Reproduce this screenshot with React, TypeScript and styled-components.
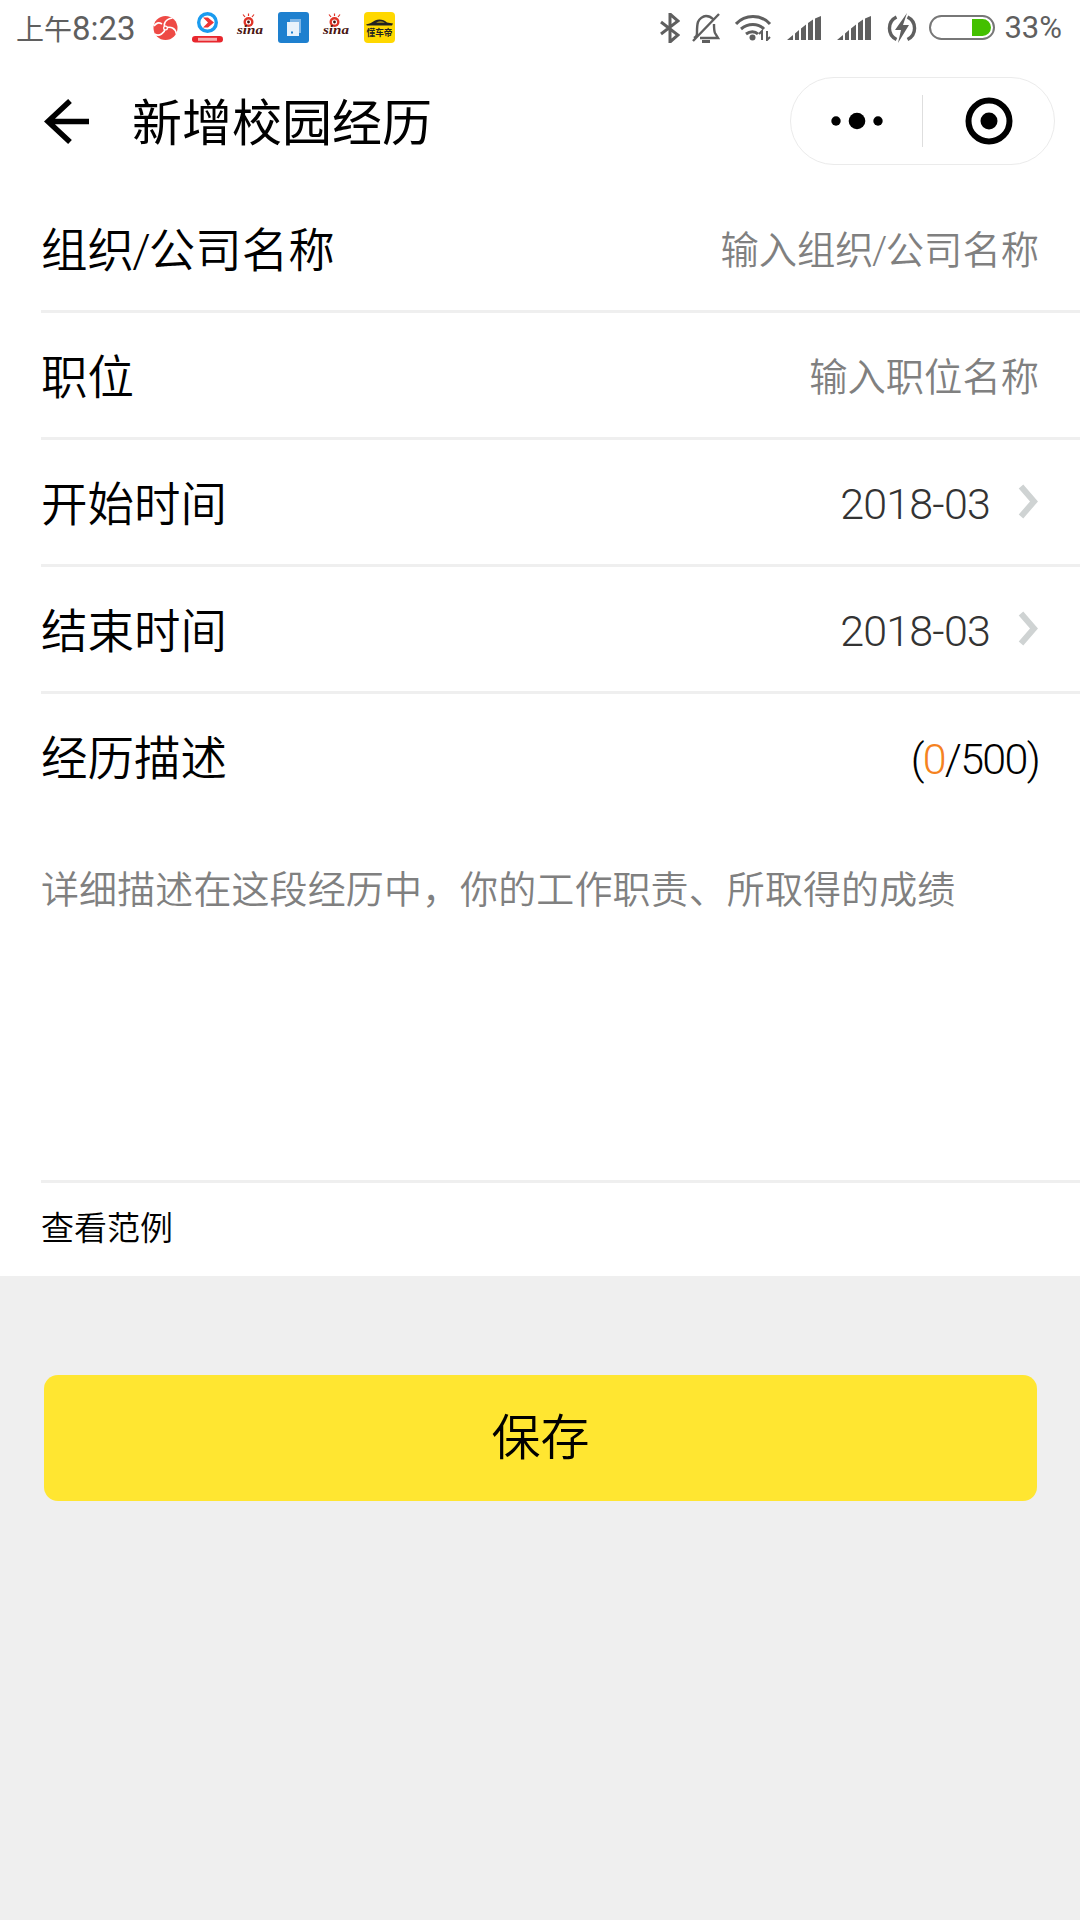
import React from "react";
import styled, { createGlobalStyle } from "styled-components";

const CJK = `"Noto Sans CJK SC", "Noto Sans", sans-serif`;
const LATIN = `Roboto, "Noto Sans CJK SC", sans-serif`;

const Global = createGlobalStyle`
  html, body {
    margin: 0;
    padding: 0;
    background: #efefef;
  }
  * { box-sizing: border-box; }
`;

const Page = styled.div`
  width: 1080px;
  height: 1920px;
  display: flex;
  flex-direction: column;
  background: #efefef;
  font-family: ${CJK};
  overflow: hidden;
`;

const StatusBar = styled.div`
  height: 60px;
  background: #fff;
  display: flex;
  align-items: center;
  justify-content: space-between;
  padding: 0 18px 5px 16px;
  color: #5f5f5f;
`;
const StatusGroup = styled.div`
  display: flex;
  align-items: center;
`;
const Clock = styled.span`
  font-family: ${CJK};
  font-size: 28px;
  width: 133px;
  white-space: nowrap;
`;
const ClockTime = styled.span`
  font-family: ${LATIN};
  font-size: 33px;
`;
const NoticeIcons = styled.div`
  display: flex;
  gap: 12px;
`;
const NoticeIcon = styled.svg`
  width: 31px;
  height: 31px;
  display: block;
  overflow: visible;
`;
const SinaText = styled.text`
  font-family: "Liberation Serif", serif;
  font-style: italic;
  font-weight: 700;
  font-size: 13px;
  fill: #4a1512;
`;
const CarText = styled.text`
  font-family: ${CJK};
  font-weight: 700;
  font-size: 9px;
  fill: #222;
`;
const Sys = styled.svg<{ $gap?: number }>`
  display: block;
  flex: none;
  margin-right: ${(p) => p.$gap ?? 0}px;
`;
const Percent = styled.span`
  font-family: ${LATIN};
  font-size: 31px;
  margin-left: 9px;
`;

const NavBar = styled.header`
  height: 126px;
  background: #fff;
  display: flex;
  align-items: center;
  padding: 0 25px 5px 44px;
`;
const BackIcon = styled.svg`
  width: 46px;
  height: 46px;
  margin-top: 2px;
  display: block;
  flex: none;
`;
const Title = styled.h1`
  margin: 0 0 4px 42px;
  flex: 1;
  font-size: 50px;
  font-weight: 400;
  line-height: 1;
  color: #000;
`;
const Capsule = styled.div`
  width: 265px;
  height: 88px;
  border: 1px solid #ebebeb;
  border-radius: 44px;
  display: flex;
  align-items: center;
  background: #fff;
`;
const CapsulePart = styled.div`
  flex: 1;
  height: 100%;
  display: flex;
  align-items: center;
  justify-content: center;
`;
const CapsuleLine = styled.div`
  width: 1px;
  height: 52px;
  background: #dedede;
`;

const Form = styled.section`
  background: #fff;
  padding-left: 41px;
`;
const Row = styled.div<{ $plain?: boolean }>`
  height: 127px;
  display: flex;
  align-items: center;
  justify-content: space-between;
  padding: 0 41px 5px 0;
  border-bottom: 3px solid ${(p) => (p.$plain ? "#fff" : "#efefef")};
`;
const Label = styled.span`
  font-family: ${LATIN};
  font-size: 46.5px;
  color: #000;
  line-height: 1;
  font-weight: 350;
  margin-top: 11px;
  white-space: nowrap;
`;
const Placeholder = styled.span`
  font-family: ${LATIN};
  font-size: 38.3px;
  font-weight: 350;
  color: #808080;
  line-height: 1;
  margin-top: 11px;
  white-space: nowrap;
`;
const Slash = styled.span`
  margin: 0 -0.04em;
`;
const Value = styled.span`
  display: flex;
  align-items: center;
  font-family: ${LATIN};
  font-size: 43px;
  font-weight: 300;
  letter-spacing: -0.8px;
  color: #333;
`;
const ValueText = styled.span`
  margin-top: 8px;
`;
const Chevron = styled.svg`
  width: 24px;
  height: 38px;
  margin: 4px 0 0 25px;
  display: block;
`;
const Counter = styled.span`
  font-family: ${LATIN};
  font-size: 43px;
  font-weight: 300;
  letter-spacing: -1.7px;
  margin-top: 11px;
  color: #000;
`;
const CounterNow = styled.span`
  color: #f58220;
`;
const DescArea = styled.div`
  height: 362px;
  padding-top: 41px;
  border-bottom: 3px solid #efefef;
`;
const DescHint = styled.div`
  font-size: 38px;
  font-weight: 350;
  line-height: 1.3;
  letter-spacing: 0.1px;
  color: #808080;
  white-space: nowrap;
`;
const Example = styled.div`
  height: 93px;
  display: flex;
  align-items: center;
  padding-bottom: 7px;
  font-size: 33px;
  font-weight: 350;
  color: #000;
`;

const SaveWrap = styled.div`
  padding: 99px 43px 0 44px;
`;
const SaveButton = styled.button`
  width: 100%;
  height: 126px;
  border: none;
  border-radius: 14px;
  padding: 0 0 10px;
  background: #ffe631;
  font-family: ${CJK};
  font-size: 49px;
  font-weight: 350;
  color: #000;
`;

const PhoenixIcon = () => (
  <NoticeIcon viewBox="0 0 31 31">
    <circle cx="16.5" cy="16" r="12" fill="#ee4a45" />
    <g fill="none" stroke="#fff" strokeWidth="1.6">
      <path d="M16.500 16c-3-4 0-9 7-10" />
      <path d="M16.500 16c5-2 10 0 11 6" />
      <path d="M16.500 16c-1 5-6 9-11 6" />
      <path d="M13 12c-3-2-6-1-8 2" />
    </g>
    <circle cx="16.500" cy="16" r="2.500" fill="#fff" />
    <circle cx="16.500" cy="16" r="1.200" fill="#ee4a45" />
  </NoticeIcon>
);
const VideoIcon = () => (
  <NoticeIcon viewBox="0 0 31 31">
    <circle cx="15.500" cy="10.500" r="8.800" fill="none" stroke="#1a9bef" strokeWidth="3.400" />
    <path d="M11 5.500h5l6 5-6 5h-5l5-5z" fill="#ee3535" />
    <rect x="0" y="24" width="31" height="6.500" rx="3.200" fill="#e8262d" />
    <rect x="6" y="25.800" width="19" height="3" fill="#f6b0b0" />
  </NoticeIcon>
);
const SinaIcon = () => (
  <NoticeIcon viewBox="0 0 31 31">
    <circle cx="13.500" cy="10" r="5" fill="#e03428" />
    <path d="M10 5 8 2.500M13.500 4V1.500M17 5l2-2.500" stroke="#e03428" strokeWidth="1.200" />
    <circle cx="13.500" cy="10" r="2.600" fill="#fff" />
    <circle cx="13.500" cy="10" r="1.400" fill="#40100c" />
    <SinaText x="2" y="22" textLength="26" lengthAdjust="spacingAndGlyphs">sina</SinaText>
  </NoticeIcon>
);
const DocIcon = () => (
  <NoticeIcon viewBox="0 0 31 31">
    <rect width="31" height="31" rx="3" fill="#1e80cf" />
    <rect x="12" y="7" width="11" height="14" fill="#7fb6e6" />
    <rect x="9" y="10" width="12" height="14" fill="#e8f2fb" />
    <rect x="13" y="19.500" width="2" height="2" fill="#1e80cf" />
  </NoticeIcon>
);
const CarIcon = () => (
  <NoticeIcon viewBox="0 0 31 31">
    <rect width="31" height="31" rx="4" fill="#ffd800" />
    <path d="M2 12.500c4-1 6-2 9-4 4-2 9-1 12 2l6 1-1 2H3z" fill="#222" />
    <path d="M12 10.500c3-1.500 6-1.500 9 0z" fill="#ffd800" />
    <CarText x="2.500" y="24" textLength="26" lengthAdjust="spacingAndGlyphs">懂车帝</CarText>
  </NoticeIcon>
);

const SignalIcon = ({ gap }: { gap: number }) => (
  <Sys $gap={gap} width="34" height="24" viewBox="0 0 34 24" fill="#5f5f5f">
    <path d="M0 24l6-5v5zM8 17.500l4-3.500v10H8zM14 12.500l5-4v15.500h-5zM21 7l5-3.500V24h-5zM28 2.500 34 0v24h-6z" />
  </Sys>
);

const DateValue = () => (
  <Value>
    <ValueText>2018-03</ValueText>
    <Chevron viewBox="0 0 24 38" fill="none" stroke="#cfd3d3" strokeWidth="6">
      <path d="M6 3.500 19 18.500 6 33.500" />
    </Chevron>
  </Value>
);

export default function App() {
  return (
    <Page>
      <Global />
      <StatusBar>
        <StatusGroup>
          <Clock>
            上午<ClockTime>8:23</ClockTime>
          </Clock>
          <NoticeIcons>
            <PhoenixIcon />
            <VideoIcon />
            <SinaIcon />
            <DocIcon />
            <SinaIcon />
            <CarIcon />
          </NoticeIcons>
        </StatusGroup>
        <StatusGroup>
          <Sys $gap={12} width="20" height="30" viewBox="0 0 20 30" fill="none" stroke="#5f5f5f" strokeWidth="3">
            <path d="M1 9l17 13-8 7V1l8 7L1 21" />
          </Sys>
          <Sys $gap={15} width="28" height="30" viewBox="0 0 28 30" fill="none" stroke="#5f5f5f" strokeWidth="2.400">
            <path d="M2 25c3-2 3-3 3-6 0-3 0-7 1-10s5-6 8-6 5 1 7 3M22 11c0 3 0 7 1 9l3 5H8M1 28 27 1" />
            <path d="M10 28.500h8" strokeWidth="3" />
          </Sys>
          <Sys $gap={14} width="38" height="26" viewBox="0 0 38 26">
            <g fill="none" stroke="#5f5f5f" strokeWidth="3">
              <path d="M1 9c9-10 25-10 34 0" />
              <path d="M6 14c7-6 17-6 23 0" />
              <path d="M11 19c4-3 9-3 12 0" />
            </g>
            <circle cx="17.500" cy="22.500" r="3" fill="#5f5f5f" />
            <path d="M27 25v-9l-3 3M32 16v9l3-3" fill="none" stroke="#5f5f5f" strokeWidth="2" />
          </Sys>
          <SignalIcon gap={16} />
          <SignalIcon gap={16} />
          <Sys $gap={12} width="30" height="30" viewBox="0 0 30 30">
            <path d="M9.500 4a12.500 12.500 0 0 0 0 22.500M20.500 4a12.500 12.500 0 0 1 0 22.500" fill="none" stroke="#5f5f5f" strokeWidth="3.400" />
            <path d="M20 0 8 17h6l-3 13 11-18h-6z" fill="#5f5f5f" />
          </Sys>
          <Sys width="66" height="25" viewBox="0 0 66 25">
            <rect x="1" y="1" width="64" height="23" rx="11.500" fill="#fff" stroke="#777" strokeWidth="2" />
            <path d="M43 4h10.500a8.500 8.500 0 0 1 0 17H43z" fill="#44c000" />
          </Sys>
          <Percent>33%</Percent>
        </StatusGroup>
      </StatusBar>

      <NavBar>
        <BackIcon viewBox="0 0 46 46" fill="none" stroke="#000" strokeWidth="5.500">
          <path d="M45 22.500H5M26 2 4 22.500 26 43" />
        </BackIcon>
        <Title>新增校园经历</Title>
        <Capsule>
          <CapsulePart>
            <svg width="54" height="18" viewBox="0 0 54 18" fill="#000">
              <circle cx="6" cy="9" r="4.700" />
              <circle cx="27" cy="9" r="8.300" />
              <circle cx="48" cy="9" r="4.700" />
            </svg>
          </CapsulePart>
          <CapsuleLine />
          <CapsulePart>
            <svg width="48" height="48" viewBox="0 0 48 48">
              <circle cx="24" cy="24" r="20.500" fill="none" stroke="#000" strokeWidth="6" />
              <circle cx="24" cy="24" r="8.500" fill="#000" />
            </svg>
          </CapsulePart>
        </Capsule>
      </NavBar>

      <Form>
        <Row>
          <Label>组织<Slash>/</Slash>公司名称</Label>
          <Placeholder>输入组织<Slash>/</Slash>公司名称</Placeholder>
        </Row>
        <Row>
          <Label>职位</Label>
          <Placeholder>输入职位名称</Placeholder>
        </Row>
        <Row>
          <Label>开始时间</Label>
          <DateValue />
        </Row>
        <Row>
          <Label>结束时间</Label>
          <DateValue />
        </Row>
        <Row $plain>
          <Label>经历描述</Label>
          <Counter>
            (<CounterNow>0</CounterNow>/500)
          </Counter>
        </Row>
        <DescArea>
          <DescHint>详细描述在这段经历中，你的工作职责、所取得的成绩</DescHint>
        </DescArea>
        <Example>查看范例</Example>
      </Form>

      <SaveWrap>
        <SaveButton>保存</SaveButton>
      </SaveWrap>
    </Page>
  );
}
